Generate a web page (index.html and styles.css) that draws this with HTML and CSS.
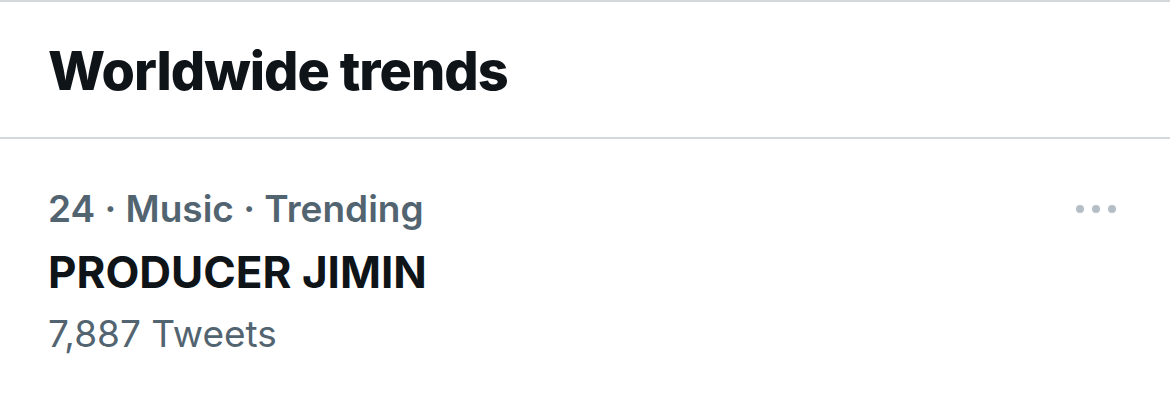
FILE: index.html
```html
<!DOCTYPE html>
<html>
<head>
<meta charset="utf-8">
<link rel="stylesheet" href="styles.css">
</head>
<body>
<div class="panel">
  <div class="header">
    <h2 class="title">Worldwide trends</h2>
  </div>
  <div class="trend">
    <div class="trend-text">
      <div class="meta">24 · Music · Trending</div>
      <div class="name">PRODUCER JIMIN</div>
      <div class="count">7,887 Tweets</div>
    </div>
    <div class="more" aria-label="More">
      <span class="dot"></span><span class="dot"></span><span class="dot"></span>
    </div>
  </div>
</div>
</body>
</html>
```

FILE: styles.css
```css
html, body {
  margin: 0;
  padding: 0;
  background: #ffffff;
}
body {
  font-family: Inter, "Liberation Sans", sans-serif;
  width: 1170px;
  height: 416px;
  overflow: hidden;
}
.panel {
  border-top: 2px solid #d4d8db;
}
.header {
  height: 135px;
  border-bottom: 2px solid #d4d8db;
  display: flex;
  align-items: center;
  padding: 2px 48px 0;
  box-sizing: border-box;
  height: 137px;
}
.title {
  margin: 0;
  font-size: 54px;
  font-weight: 800;
  color: #0f1419;
  letter-spacing: -1px;
  line-height: 1;
}
.trend {
  display: flex;
  justify-content: space-between;
  align-items: flex-start;
  padding: 48px 54px 0 48px;
}
.meta {
  font-size: 37px;
  font-weight: 600;
  color: #536471;
  line-height: 44px;
}
.name {
  margin-top: 15px;
  font-size: 44px;
  font-weight: 700;
  color: #0f1419;
  line-height: 52px;
}
.count {
  margin-top: 14px;
  font-size: 37px;
  font-weight: 400;
  color: #536471;
  line-height: 44px;
}
.more {
  display: flex;
  gap: 8px;
  margin-top: 18px;
}
.dot {
  width: 8px;
  height: 8px;
  border-radius: 50%;
  background: #b3bec7;
}
```
